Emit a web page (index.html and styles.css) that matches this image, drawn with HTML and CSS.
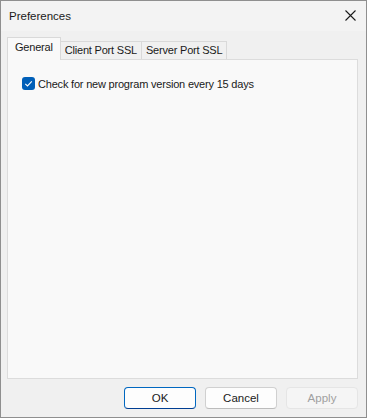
FILE: index.html
```html
<!DOCTYPE html>
<html>
<head>
<meta charset="utf-8">
<link rel="stylesheet" href="styles.css">
</head>
<body>
<div class="window">
  <div class="titlebar">
    <span class="title">Preferences</span>
    <span class="close" aria-label="Close">
      <svg width="11" height="11" viewBox="0 0 11 11"><path d="M0.5 0.5 L10.5 10.5 M10.5 0.5 L0.5 10.5" stroke="#1a1a1a" stroke-width="1.1" fill="none"/></svg>
    </span>
  </div>
  <div class="content">
    <div class="tabs">
      <div class="tab active">General</div>
      <div class="tab">Client Port SSL</div>
      <div class="tab">Server Port SSL</div>
    </div>
    <div class="panel">
      <label class="check">
        <span class="box"><svg width="13" height="13" viewBox="0 0 13 13"><path d="M3.3 6.8 L5.5 8.9 L9.8 4.4" stroke="#fff" stroke-width="1.1" fill="none"/></svg></span>
        <span class="label">Check for new program version every 15 days</span>
      </label>
    </div>
    <div class="buttons">
      <button class="btn default">OK</button>
      <button class="btn">Cancel</button>
      <button class="btn disabled">Apply</button>
    </div>
  </div>
</div>
</body>
</html>
```
FILE: styles.css
```css
html, body {
  margin: 0;
  padding: 0;
  width: 367px;
  height: 418px;
  overflow: hidden;
}
body {
  font-family: "Liberation Sans", Arial, sans-serif;
  font-size: 11px;
  letter-spacing: -0.2px;
  color: #1a1a1a;
}
.window {
  box-sizing: border-box;
  width: 367px;
  height: 418px;
  border: 1px solid #8f8f8f;
  background: #f0f0f0;
  display: flex;
  flex-direction: column;
}
.titlebar {
  height: 30px;
  background: #f3f3f3;
  display: flex;
  align-items: center;
  justify-content: space-between;
  padding: 0 10px 0 8px;
}
.title {
  font-size: 11.5px;
  letter-spacing: 0;
  color: #1a1a1a;
  margin-top: -1px;
}
.close {
  display: flex;
  margin-top: -2px;
}
.content {
  flex: 1;
  display: flex;
  flex-direction: column;
  padding: 6px 8px 8px 6px;
}
.tabs {
  display: flex;
  align-items: flex-end;
  height: 22px;
  position: relative;
  z-index: 1;
}
.tab {
  box-sizing: border-box;
  height: 18px;
  padding: 0 4px 0 4px;
  border: 1px solid #d9d9d9;
  border-bottom: none;
  border-left: none;
  background: #f0f0f0;
  line-height: 17px;
  color: #1a1a1a;
}
.tab.active {
  border-left: 1px solid #d9d9d9;
  background: #f9f9f9;
  padding: 0 7px 0 7px;
  line-height: 18px;
  margin-bottom: -1px;
  height: 23px;
}
.panel {
  flex: 1;
  background: #f9f9f9;
  border: 1px solid #dcdcdc;
  padding: 17px 14px;
}
.check {
  display: flex;
  align-items: center;
  gap: 3px;
}
.box {
  box-sizing: border-box;
  width: 13px;
  height: 13px;
  border-radius: 3px;
  background: #005fb8;
  display: flex;
}
.label {
  color: #1a1a1a;
}
.buttons {
  display: flex;
  justify-content: flex-end;
  gap: 9px;
  margin-top: 8px;
}
.btn {
  box-sizing: border-box;
  width: 72px;
  height: 22px;
  border: 1px solid #d0d0d0;
  border-bottom-color: #bcbcbc;
  border-radius: 4px;
  background: #fdfdfd;
  font-family: "Liberation Sans", Arial, sans-serif;
  font-size: 11.5px;
  letter-spacing: 0;
  color: #1a1a1a;
  padding: 0;
}
.btn.default {
  border: 1px solid #0067c0;
  border-bottom-color: #003e92;
}
.btn.disabled {
  background: #f5f5f5;
  border-color: #e5e5e5;
  color: #a0a0a0;
}
```
